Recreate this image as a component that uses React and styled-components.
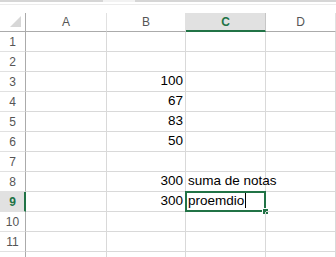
import React from "react";
import styled, { createGlobalStyle } from "styled-components";

const GREEN = "#217346";
const GRID = "#d9d9d9";
const HEAD_LINE = "#ababab";

const columns = ["A", "B", "C", "D"];
const selectedCol = "C";
const selectedRow = 9;
const visibleRows = 11;

const cells = {
  "B3": "100",
  "B4": "67",
  "B5": "83",
  "B6": "50",
  "B8": "300",
  "C8": "suma de notas",
  "B9": "300",
  "C9": "proemdio",
};

const GlobalStyle = createGlobalStyle`
  html, body {
    margin: 0;
    padding: 0;
    background: #ffffff;
    overflow: hidden;
  }
  body {
    font-family: "Liberation Sans", Arial, sans-serif;
  }
`;

const App = () => {
  // one extra row at the bottom, cut by the window edge, so no label shown
  const rows = Array.from({ length: visibleRows + 1 }, (_, i) => i + 1);

  return (
    <S.Wrap>
      <GlobalStyle />
      <S.TopBar>
        <S.TopLine>
          <S.TopSeg $w="103px" />
          <S.TopGap />
          <S.TopSeg $w="auto" $grow />
        </S.TopLine>
        <S.TopLineLight />
      </S.TopBar>
      <S.Grid>
        <S.Corner>
          <svg width="12" height="12" viewBox="0 0 12 12">
            <polygon points="11,0 11,11 0,11" fill="#d7d7d7" />
          </svg>
        </S.Corner>
        {columns.map((c) => (
          <S.ColHead key={c} $active={c === selectedCol}>
            {c}
          </S.ColHead>
        ))}
        {rows.map((r) => (
          <React.Fragment key={r}>
            <S.RowHead $active={r === selectedRow}>
              {r <= visibleRows ? r : ""}
            </S.RowHead>
            {columns.map((c) => {
              const id = c + r;
              const value = cells[id];
              const isNum = value !== undefined && /^\d+$/.test(value);
              const isSel = c === selectedCol && r === selectedRow;
              return (
                <S.Cell key={id} $num={isNum}>
                  {value && <S.Value>{value}</S.Value>}
                  {isSel && <S.Caret />}
                  {isSel && <S.Selection />}
                  {isSel && <S.Handle />}
                </S.Cell>
              );
            })}
          </React.Fragment>
        ))}
      </S.Grid>
    </S.Wrap>
  );
};

const S = {
  Wrap: styled.div`
    width: 336px;
    height: 257px;
    overflow: hidden;
    background: #fff;
  `,
  TopBar: styled.div`
    height: 13px;
    display: flex;
    flex-direction: column;
  `,
  TopLine: styled.div`
    display: flex;
    height: 2px;
  `,
  TopSeg: styled.div`
    width: ${({ $w }) => $w};
    flex: ${({ $grow }) => ($grow ? 1 : "none")};
    background: #d6d6d6;
  `,
  TopGap: styled.div`
    width: 32px;
    background: #f2f2f2;
  `,
  TopLineLight: styled.div`
    margin-top: 2px;
    height: 1px;
    background: #ececec;
  `,
  Grid: styled.div`
    display: grid;
    grid-template-columns: 26px 81px 79px 80px 1fr;
    grid-template-rows: 19px;
    grid-auto-rows: 20px;
  `,
  Corner: styled.div`
    box-sizing: border-box;
    border-right: 1px solid ${HEAD_LINE};
    border-bottom: 1px solid ${HEAD_LINE};
    display: flex;
    align-items: flex-end;
    justify-content: flex-end;
    padding: 0 3px 3px 0;
  `,
  ColHead: styled.div`
    box-sizing: border-box;
    display: flex;
    align-items: center;
    justify-content: center;
    font-size: 12px;
    color: ${({ $active }) => ($active ? GREEN : "#555")};
    font-weight: ${({ $active }) => ($active ? 700 : 400)};
    background: ${({ $active }) => ($active ? "#e1e1e1" : "#fff")};
    border-right: 1px solid ${({ $active }) => ($active ? "#c6c6c6" : "#e1e1e1")};
    border-bottom: ${({ $active }) =>
      $active ? `2px solid ${GREEN}` : `1px solid ${HEAD_LINE}`};
    padding-top: ${({ $active }) => ($active ? "1px" : "0")};
  `,
  RowHead: styled.div`
    box-sizing: border-box;
    display: flex;
    align-items: center;
    justify-content: center;
    font-size: 12px;
    color: ${({ $active }) => ($active ? GREEN : "#555")};
    font-weight: ${({ $active }) => ($active ? 700 : 400)};
    background: ${({ $active }) => ($active ? "#e1e1e1" : "#fff")};
    border-right: ${({ $active }) =>
      $active ? `2px solid ${GREEN}` : `1px solid ${HEAD_LINE}`};
    border-bottom: 1px solid #e1e1e1;
    padding-left: ${({ $active }) => ($active ? "1px" : "0")};
  `,
  Cell: styled.div`
    position: relative;
    box-sizing: border-box;
    border-right: 1px solid ${GRID};
    border-bottom: 1px solid ${GRID};
    display: flex;
    align-items: flex-end;
    justify-content: ${({ $num }) => ($num ? "flex-end" : "flex-start")};
    padding: 0 2px 2px 2px;
    font-size: 13.5px;
    color: #000;
    white-space: nowrap;
  `,
  Value: styled.span`
    line-height: 16px;
  `,
  Caret: styled.span`
    width: 1px;
    height: 15px;
    margin-left: 1px;
    margin-bottom: 1px;
    background: #000;
  `,
  Selection: styled.div`
    position: absolute;
    left: -1px;
    top: -1px;
    right: -1px;
    bottom: -1px;
    border: 2px solid ${GREEN};
    pointer-events: none;
  `,
  Handle: styled.div`
    position: absolute;
    right: -4px;
    bottom: -4px;
    width: 5px;
    height: 5px;
    background: ${GREEN};
    border: 1px solid #fff;
  `,
};

export default App;
